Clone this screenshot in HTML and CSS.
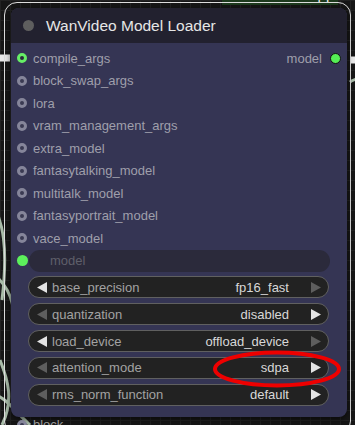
FILE: index.html
```html
<!DOCTYPE html>
<html lang="en">
<head>
    <meta charset="UTF-8">
    <meta name="viewport" content="width=device-width, initial-scale=1.0">
    <title>WanVideo Model Loader</title>
    <link rel="stylesheet" href="styles.css">
</head>
<body>
    <div class="canvas">
        <svg class="wires" width="355" height="425" viewBox="0 0 355 425">
            <path d="M-10 200 C 4 220, 8 250, 2 300" />
            <path d="M-10 270 C 0 280, 14 290, 14 320" />
            <path d="M0 360 C 8 380, 14 400, 2 425" />
            <path d="M-4 395 C 8 400, 14 410, 30 425" />
            <path d="M350 82 C 352 80, 354 80, 360 78" />
            <path d="M350 60 L 360 60" class="thick" />
            <path d="M0 58 L 10 58" class="thick" />
        </svg>
        <div class="group-title">WanVideoWrapper</div>
        <div class="selection"></div>

        <div class="node">
            <div class="node-title">
                <span class="title-dot"></span>
                <span>WanVideo Model Loader</span>
            </div>
            <div class="node-body">
                <div class="slots">
                    <div class="inputs">
                        <div class="slot"><span class="dot dot-linked"></span>compile_args</div>
                        <div class="slot"><span class="dot"></span>block_swap_args</div>
                        <div class="slot"><span class="dot"></span>lora</div>
                        <div class="slot"><span class="dot"></span>vram_management_args</div>
                        <div class="slot"><span class="dot"></span>extra_model</div>
                        <div class="slot"><span class="dot"></span>fantasytalking_model</div>
                        <div class="slot"><span class="dot"></span>multitalk_model</div>
                        <div class="slot"><span class="dot"></span>fantasyportrait_model</div>
                        <div class="slot"><span class="dot"></span>vace_model</div>
                    </div>
                    <div class="outputs">
                        <div class="slot slot-out">model<span class="dot dot-out"></span></div>
                    </div>
                </div>

                <div class="widgets">
                    <div class="widget-row">
                        <span class="dot dot-widget"></span>
                        <div class="text-widget">model</div>
                    </div>
                    <div class="combo">
                        <svg class="arrow on" width="10" height="11" viewBox="0 0 10 11"><polygon points="10,0 10,11 0,5.5" /></svg>
                        <span class="combo-label">base_precision</span>
                        <span class="combo-value">fp16_fast</span>
                        <svg class="arrow" width="10" height="11" viewBox="0 0 10 11"><polygon points="0,0 0,11 10,5.5" /></svg>
                    </div>
                    <div class="combo">
                        <svg class="arrow" width="10" height="11" viewBox="0 0 10 11"><polygon points="10,0 10,11 0,5.5" /></svg>
                        <span class="combo-label">quantization</span>
                        <span class="combo-value">disabled</span>
                        <svg class="arrow on" width="10" height="11" viewBox="0 0 10 11"><polygon points="0,0 0,11 10,5.5" /></svg>
                    </div>
                    <div class="combo">
                        <svg class="arrow on" width="10" height="11" viewBox="0 0 10 11"><polygon points="10,0 10,11 0,5.5" /></svg>
                        <span class="combo-label">load_device</span>
                        <span class="combo-value">offload_device</span>
                        <svg class="arrow" width="10" height="11" viewBox="0 0 10 11"><polygon points="0,0 0,11 10,5.5" /></svg>
                    </div>
                    <div class="combo">
                        <svg class="arrow" width="10" height="11" viewBox="0 0 10 11"><polygon points="10,0 10,11 0,5.5" /></svg>
                        <span class="combo-label">attention_mode</span>
                        <span class="combo-value">sdpa</span>
                        <svg class="arrow on" width="10" height="11" viewBox="0 0 10 11"><polygon points="0,0 0,11 10,5.5" /></svg>
                    </div>
                    <div class="combo">
                        <svg class="arrow" width="10" height="11" viewBox="0 0 10 11"><polygon points="10,0 10,11 0,5.5" /></svg>
                        <span class="combo-label">rms_norm_function</span>
                        <span class="combo-value">default</span>
                        <svg class="arrow on" width="10" height="11" viewBox="0 0 10 11"><polygon points="0,0 0,11 10,5.5" /></svg>
                    </div>
                </div>
            </div>
        </div>

        <div class="below"><span class="dot"></span>block</div>

        <!-- red marker round the attention_mode value -->
        <svg class="marker" width="355" height="425" viewBox="0 0 355 425">
            <ellipse cx="277" cy="369" rx="62" ry="16.5" />
        </svg>
    </div>
</body>
</html>
```

FILE: styles.css
```css
body {
    margin: 0;
    background-color: #161616;
    font-family: "Liberation Sans", Arial, sans-serif;
    overflow: hidden;
}

.canvas {
    position: relative;
    width: 355px;
    height: 425px;
    overflow: hidden;
    background-color: #161616;
    background-image:
        linear-gradient(to right, #222 1px, transparent 1px),
        linear-gradient(to bottom, #222 1px, transparent 1px);
    background-size: 10px 10px;
}

.wires {
    position: absolute;
    left: 0;
    top: 0;
}

.wires path {
    fill: none;
    stroke: #a9bca9;
    stroke-width: 3;
}

.wires .thick {
    stroke: #e8e8e8;
    stroke-width: 7;
}

.group-title {
    position: absolute;
    left: 222px;
    top: -14px;
    width: 116px;
    height: 19px;
    background-color: #1d3a1d;
    color: #eee;
    font-size: 15px;
    text-align: center;
}

.selection {
    position: absolute;
    left: 4px;
    top: 2px;
    width: 345px;
    height: 430px;
    border: 1.5px solid #ddd;
    border-radius: 13px;
}

.node {
    position: absolute;
    left: 11px;
    top: 8px;
    width: 336px;
    height: 409px;
    border-radius: 8px;
    overflow: hidden;
    background-color: #353554;
    box-shadow: 0 2px 6px rgba(0, 0, 0, 0.6);
}

.node-title {
    display: flex;
    align-items: center;
    gap: 12px;
    height: 35px;
    padding-left: 12px;
    background-color: #22212f;
    color: #e6e6e6;
    font-size: 15.5px;
}

.title-dot {
    width: 11px;
    height: 11px;
    border-radius: 50%;
    background-color: #5e5e5e;
}

.node-body {
    padding-top: 4px;
}

.slots {
    display: flex;
    justify-content: space-between;
}

.slot {
    display: flex;
    align-items: center;
    height: 22.5px;
    gap: 6px;
    padding-left: 6px;
    color: #9f9fab;
    font-size: 13px;
}

.slot-out {
    padding-left: 0;
    padding-right: 6px;
    gap: 8px;
}

.dot {
    box-sizing: border-box;
    width: 10px;
    height: 10px;
    border-radius: 50%;
    border: 3px solid #85859a;
    background-color: #3a3a52;
}

.dot-linked {
    border-color: #66ee66;
    background-color: #2a2a3a;
}

.dot-out {
    border: 1px solid #111;
    background-color: #55ee55;
    width: 11px;
    height: 11px;
}

.widgets {
    display: flex;
    flex-direction: column;
    gap: 4.85px;
    padding-left: 6px;
}

.widget-row {
    display: flex;
    align-items: center;
    gap: 1px;
}

.dot-widget {
    border: none;
    background-color: #5cf05c;
    width: 11px;
    height: 11px;
}

.text-widget {
    width: 280px;
    height: 22px;
    line-height: 22px;
    padding-left: 21px;
    border-radius: 11px;
    background-color: #2b2a3b;
    color: #5f5f6a;
    font-size: 13px;
}

.combo {
    box-sizing: border-box;
    display: flex;
    align-items: center;
    width: 301px;
    height: 22px;
    margin-left: 11px;
    padding: 0 7px 0 8px;
    border: 1px solid #606060;
    border-radius: 11px;
    background-color: #222;
    font-size: 13px;
}

.arrow {
    fill: #5e5e5e;
    flex: none;
}

.arrow.on {
    fill: #e4e4e4;
}

.combo-label {
    margin-left: 5px;
    color: #a2a2a2;
}

.combo-value {
    margin-left: auto;
    margin-right: 22px;
    color: #d8d8d8;
}

.below {
    position: absolute;
    left: 17px;
    top: 417px;
    display: flex;
    align-items: center;
    gap: 6px;
    color: #999;
    font-size: 13px;
}

.marker {
    position: absolute;
    left: 0;
    top: 0;
}

.marker ellipse {
    fill: none;
    stroke: #ee0000;
    stroke-width: 4;
}
```
